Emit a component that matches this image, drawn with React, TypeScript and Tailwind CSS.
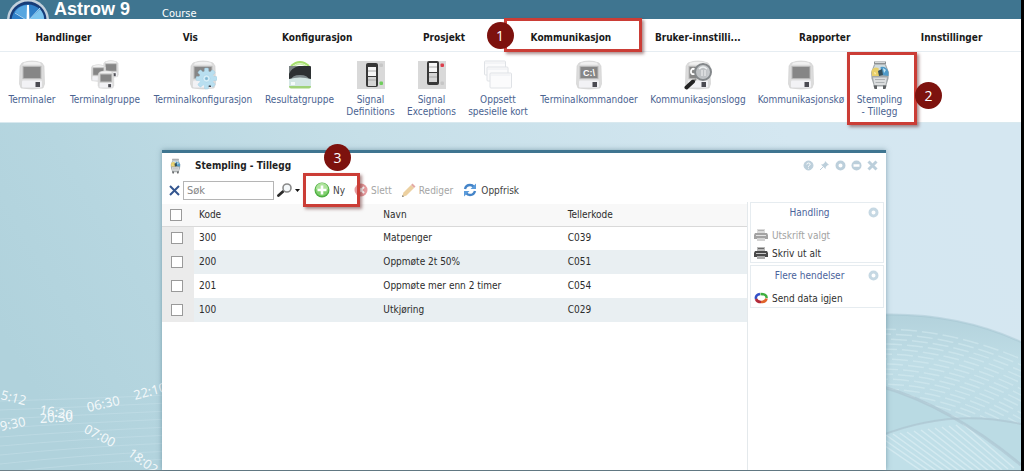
import clsx from "clsx"
import type { ComponentType, PropsWithChildren } from "react"

interface TerminalProps {
  x?: number
  y?: number
  scale?: number
  label?: string
}

const Terminal = ({ x = 0, y = 0, scale = 1, label }: TerminalProps) => (
  <g transform={`translate(${x} ${y}) scale(${scale})`}>
    <path
      d="M4 3q10-4 20 0l2 3 .5 18-1.500 4q-11 2-22 0L1.500 24 2 6z"
      fill="#dcdcdc"
      stroke="#cfcfcf"
      strokeWidth="0.6"
    />
    <path d="M6 2.800q8-2 16 0l1 2H5z" fill="#f1f1f1" />
    <rect x="5" y="6.500" width="18" height="12" fill="#868686" stroke="#b9b9b9" />
    <rect x="4" y="20.500" width="20" height="7" rx="1" fill="#f2f2f5" />
    <rect x="17.500" y="22" width="4.500" height="5" fill="#4b4b52" />
    {label ? (
      <text
        x="14"
        y="16"
        textAnchor="middle"
        fontSize="9"
        fontWeight="bold"
        fill="#fff"
        fontFamily="Liberation Sans, sans-serif"
      >
        {label}
      </text>
    ) : null}
  </g>
)

const Svg = ({ children }: PropsWithChildren) => (
  <svg viewBox="0 0 28 30" className="h-[30px] w-7 shrink-0" aria-hidden="true">
    {children}
  </svg>
)

const TerminalIcon = () => (
  <Svg>
    <Terminal />
  </Svg>
)

const TerminalGroupIcon = () => (
  <Svg>
    <Terminal x={11.500} y={0} scale={0.6} />
    <Terminal x={-1} y={4} scale={0.6} />
    <Terminal x={6} y={10} scale={0.64} />
  </Svg>
)

const TerminalConfigIcon = () => (
  <Svg>
    <Terminal />
    <g fill="#b9dff0" stroke="#9ccbe0" strokeWidth="0.4">
      {[0, 45, 90, 135, 180, 225, 270, 315].map((angle) => (
        <rect
          key={angle}
          x="15.500"
          y="8"
          width="4"
          height="5"
          rx="1"
          transform={`rotate(${angle} 17.500 18.500)`}
        />
      ))}
      <circle cx="17.500" cy="18.500" r="7.500" stroke="none" />
      <circle cx="17.500" cy="18.500" r="3.500" fill="#d9f0f9" />
      <circle cx="17.500" cy="18.500" r="1.500" fill="#7fb6d2" />
    </g>
  </Svg>
)

const ResultIcon = () => (
  <Svg>
    <path d="M5 6q9-8 18 0" fill="none" stroke="#a5df6c" strokeWidth="2" />
    <path d="M8 6q6-4 12 0" fill="none" stroke="#c8edaa" strokeWidth="1.500" />
    <rect x="3" y="6" width="22" height="16" rx="1" fill="#2d3133" />
    <path d="M3 6h10q-8 2-10 8z" fill="#7b8384" />
    <path d="M5 20q1-5 9-5t9 5z" fill="#7d888b" />
    <path d="M3 19q11-3 22 0v7q0 2-2 2H5q-2 0-2-2z" fill="#d3e6e4" />
    <path d="M3 26h22q0 2.500-2 2.500H5q-2 0-2-2.500z" fill="#9fd277" />
    <rect x="5" y="22" width="4" height="3" fill="#f4fbfa" />
  </Svg>
)

const SwitchIcon = ({ on }: { on: boolean }) => (
  <Svg>
    <rect x="0" y="1" width="28" height="28" fill="#d9d9d9" />
    <rect x="9" y={on ? 3 : 1} width="12" height="24" rx="2" fill="#383838" />
    <rect x="11" y={on ? 7 : 3} width="8" height="9" fill="#f6f6f6" />
    <rect x="11" y={on ? 17 : 13} width="8" height="9" fill="#d4d4d4" />
    <path d={on ? "M11 11h8M11 20h8" : "M11 7h8M11 17h8"} stroke="#aaa" />
    <rect
      x="22.500"
      y={on ? 21.500 : 3.500}
      width="3.500"
      height="3.500"
      rx="1"
      fill={on ? "#6fce5c" : "#dc3e4c"}
    />
    <rect x="22.500" y={on ? 3.500 : 21.500} width="3.500" height="3.500" rx="1" fill="#c6c6c6" />
  </Svg>
)

const SignalDefinitionsIcon = () => <SwitchIcon on />
const SignalExceptionsIcon = () => <SwitchIcon on={false} />

const CardsIcon = () => (
  <Svg>
    <g fill="#fbfbfc" stroke="#dfe2e6">
      <rect x="0.500" y="1" width="21" height="14" rx="1" />
      <rect x="3" y="7" width="21" height="14" rx="1" />
      <rect x="6" y="13" width="21.500" height="15" rx="1" />
    </g>
    <path d="M1 3h20M3.500 9h20M6.500 15h20" stroke="#eceef1" />
  </Svg>
)

const CommandIcon = () => (
  <Svg>
    <Terminal label="C:\" />
  </Svg>
)

const LogIcon = () => (
  <Svg>
    <Terminal />
    <path
      d="M11 9.500q-3-2-4 1.500-.5 4 4 3"
      fill="none"
      stroke="#fff"
      strokeWidth="1.800"
    />
    <path d="M12 19l-3 3" stroke="#8a8a8a" strokeWidth="2" />
    <path d="M9 21.500l-6.500 6" stroke="#242424" strokeWidth="4" strokeLinecap="round" />
    <circle cx="19" cy="12" r="8" fill="#c4c8cb" fillOpacity="0.9" />
    <circle cx="19" cy="12" r="8" fill="none" stroke="#83878a" strokeWidth="2" />
    <path d="M15 9q4-4 8 0" fill="none" stroke="#eef1f2" strokeWidth="1.500" />
    <path d="M18 10v6m3-6v6" stroke="#f5f5f5" />
  </Svg>
)

const PunchArt = () => (
  <>
    <path d="M8 1.500h12v3H8z" fill="#8d9193" />
    <path d="M9 2.500h10" stroke="#d5d8d9" />
    <path d="M8 4.500h12l3 8-.5 6-2.500 8H8l-2.500-8-.5-6z" fill="#a2a7a9" />
    <path d="M9 5h10l2 5H7z" fill="#cfdbde" />
    <path d="M5.500 11q2-5 7-3l1 8H6z" fill="#e8cf6a" />
    <path d="M14.500 7q6-1 8 5v4l-7-1z" fill="#4f9ac8" />
    <path d="M12 11l4-2 1 6-4 1z" fill="#35505c" />
    <path d="M17 8l3 2-2 3z" fill="#c8e8f4" />
    <path d="M8 12l2 1-1 2z" fill="#fff3c0" />
    <path d="M7 17.500h14l-1.500 7.500h-11z" fill="#dcdedf" />
    <path d="M9 19.500h10M9.500 22.500h9" stroke="#aeb2b4" />
    <path d="M7.500 25.500h3.500v3.500H8.500zM17 25.500h3.500l-1 3.500H17z" fill="#5f6264" />
  </>
)

const PunchIcon = () => (
  <Svg>
    <PunchArt />
  </Svg>
)

interface MenuProps {
  label: string
  step?: boolean
}

const menus: MenuProps[] = [
  { label: "Handlinger" },
  { label: "Vis" },
  { label: "Konfigurasjon" },
  { label: "Prosjekt" },
  { label: "Kommunikasjon", step: true },
  { label: "Bruker-innstilli..." },
  { label: "Rapporter" },
  { label: "Innstillinger" },
]

interface Tool {
  lines: string[]
  width: string
  Icon: ComponentType
  step?: boolean
}

const tools: Tool[] = [
  { lines: ["Terminaler"], width: "w-[62px]", Icon: TerminalIcon },
  { lines: ["Terminalgruppe"], width: "w-[84px]", Icon: TerminalGroupIcon },
  { lines: ["Terminalkonfigurasjon"], width: "w-[112px]", Icon: TerminalConfigIcon },
  { lines: ["Resultatgruppe"], width: "w-[81px]", Icon: ResultIcon },
  { lines: ["Signal", "Definitions"], width: "w-[61px]", Icon: SignalDefinitionsIcon },
  { lines: ["Signal", "Exceptions"], width: "w-[61px]", Icon: SignalExceptionsIcon },
  { lines: ["Oppsett", "spesielle kort"], width: "w-[72px]", Icon: CardsIcon },
  { lines: ["Terminalkommandoer"], width: "w-[110px]", Icon: CommandIcon },
  { lines: ["Kommunikasjonslogg"], width: "w-[108px]", Icon: LogIcon },
  { lines: ["Kommunikasjonskø"], width: "w-[98px]", Icon: TerminalIcon },
  { lines: ["Stempling", "- Tillegg"], width: "w-[59px]", Icon: PunchIcon, step: true },
]

const rows = [
  { code: "300", name: "Matpenger", counter: "C039" },
  { code: "200", name: "Oppmøte 2t 50%", counter: "C051" },
  { code: "201", name: "Oppmøte mer enn 2 timer", counter: "C054" },
  { code: "100", name: "Utkjøring", counter: "C029" },
]

const times = [
  { text: "5:12", x: 0, y: 276, angle: 14 },
  { text: "9:30", x: 1, y: 308, angle: -12 },
  { text: "16:20", x: 39, y: 291, angle: 10 },
  { text: "20:30", x: 40, y: 300, angle: -3 },
  { text: "06:30", x: 88, y: 289, angle: -13 },
  { text: "22:10", x: 135, y: 277, angle: -15 },
  { text: "07:00", x: 83, y: 309, angle: 28 },
  { text: "18:02", x: 127, y: 332, angle: 36 },
]

const Frame = ({ className }: { className: string }) => (
  <span
    className={clsx(
      "pointer-events-none absolute z-10 border-[3px] border-[#cb3d36] shadow-[2px_2px_3px_rgba(90,30,30,0.5)]",
      className,
    )}
  />
)

const Badge = ({ className, children }: PropsWithChildren<{ className: string }>) => (
  <span
    className={clsx(
      "pointer-events-none absolute z-20 flex size-[27px] items-center justify-center rounded-full bg-[#7d120e] font-['Open_Sans',sans-serif] text-sm font-normal text-white",
      className,
    )}
  >
    {children}
  </span>
)

const Brand = () => (
  <header className="flex h-[19px] overflow-hidden bg-[#3f7590] pl-[6px] text-white">
    <svg viewBox="0 0 44 44" className="size-[44px] shrink-0" aria-hidden="true">
      <circle cx="22" cy="20" r="21" fill="#c3d0dc" />
      <circle cx="22" cy="20" r="18.500" fill="#173c78" />
      <circle cx="22" cy="21" r="16.500" fill="#2f7fc8" />
      <path d="M22 21L9 12a16 16 0 0 1 12-7z" fill="#57a6e0" />
      <path d="M22 21L34 9a16 16 0 0 1 4 12z" fill="#7cc4ee" />
      <path d="M9 13l13 8M34 8l-12 13" stroke="#a9d4f0" />
      <path d="M21 5h2l.5 16h-3z" fill="#fff" />
    </svg>
    <h1 className="ml-1 font-['Liberation_Sans',sans-serif] text-[18px]/[19px] font-bold">
      Astrow 9
    </h1>
    <span className="ml-8 text-[11px]/[28px]">Course</span>
  </header>
)

const MenuBar = () => (
  <nav className="grid h-[33px] grid-cols-8 border-b border-[#e6edf2] bg-white pr-[6px]">
    {menus.map(({ label, step }) => (
      <div key={label} className="relative flex">
        <button type="button" className="w-full pt-1 text-[10px] font-bold text-[#1a1a1a]">
          {label}
        </button>
        {step ? (
          <>
            <Frame className="-inset-y-px -right-2 -left-1" />
            <Badge className="top-[3px] -left-[21px]">1</Badge>
          </>
        ) : null}
      </div>
    ))}
  </nav>
)

const ToolBar = () => (
  <div className="flex h-[71px] border-b border-[#d9e9ef] bg-white pl-px">
    {tools.map(({ lines, width, Icon, step }) => (
      <div key={lines.join(" ")} className={clsx("relative shrink-0", width)}>
        <button
          type="button"
          className="flex w-full flex-col items-center pt-2 text-[10px]/[12px] whitespace-nowrap text-[#4a6391]"
        >
          <Icon />
          <span className="mt-1">
            {lines.map((line) => (
              <span key={line} className="block">
                {line}
              </span>
            ))}
          </span>
        </button>
        {step ? (
          <>
            <Frame className="top-0 -right-2 -bottom-[3px] -left-[3px]" />
            <Badge className="top-[30px] -right-[33px]">2</Badge>
          </>
        ) : null}
      </div>
    ))}
  </div>
)

const strands = Array.from({ length: 16 }, (_, i) => i)

const Backdrop = () => (
  <svg
    viewBox="0 0 1021 349"
    preserveAspectRatio="xMinYMin slice"
    className="absolute inset-0 size-full"
    aria-hidden="true"
  >
    <defs>
      <linearGradient id="sky" x1="0" y1="0.6" x2="1" y2="0.4">
        <stop offset="0" stopColor="#b0d2dc" />
        <stop offset="0.16" stopColor="#b6d6e0" />
        <stop offset="0.45" stopColor="#c6dfe8" />
        <stop offset="0.85" stopColor="#d4e7f1" />
        <stop offset="1" stopColor="#d5e7f1" />
      </linearGradient>
      <linearGradient id="ribbon" x1="0" y1="0" x2="0" y2="1">
        <stop offset="0" stopColor="#b3d2dc" />
        <stop offset="0.3" stopColor="#bfdde6" />
        <stop offset="1" stopColor="#bcdbe5" />
      </linearGradient>
    </defs>
    <rect width="1021" height="349" fill="url(#sky)" />
    <g fill="none" stroke="#c9e3ea" strokeOpacity="0.45">
      {strands.slice(0, 9).map((i) => (
        <path key={i} d={`M0 ${278 + i * 9}Q80 ${276 + i * 8} 170 ${272 + i * 8}`} />
      ))}
    </g>
    <path d="M840 195Q940 182 1021 219V349H840z" fill="url(#ribbon)" />
    <path
      d="M840 195Q940 182 1021 219"
      fill="none"
      stroke="#a6c6d1"
      strokeWidth="2"
      strokeOpacity="0.5"
    />
    <g fill="none" stroke="#dceff5" strokeOpacity="0.45" strokeWidth="1.500">
      {strands.map((i) => (
        <path
          key={i}
          strokeDasharray="16 5"
          strokeDashoffset={i * 5}
          d={`M880 ${206 + i * 5}Q950 ${206 + i * 5} 1021 ${236 + i * 6}`}
        />
      ))}
    </g>
    <path d="M880 263Q950 283 1021 342V349H880z" fill="#b9dae3" />
    <path d="M880 313Q920 298 962 295L1021 342V349H880z" fill="#c0dfe8" />
    <g fill="none" stroke="#dceef4" strokeWidth="1.500" strokeOpacity="0.7">
      {strands.slice(0, 14).map((i) => (
        <path key={i} d={`M${872 + i * 7} ${314 - i}l${64 - i} 44`} />
      ))}
    </g>
    <path d="M955 296Q985 292 1021 301V342Q990 316 955 296z" fill="#bbdbe4" />
    <g fill="none" stroke="#a9bfcc" strokeOpacity="0.55" strokeWidth="3">
      <path d="M880 263Q950 283 1021 342" />
      <path d="M880 313Q950 285 1021 301" strokeWidth="2" />
    </g>
    <g fill="#fff" fillOpacity="0.85" fontSize="13" fontFamily="Noto Sans, sans-serif">
      {times.map(({ text, x, y, angle }) => (
        <text key={text} transform={`translate(${x} ${y}) rotate(${angle})`}>
          {text}
        </text>
      ))}
    </g>
  </svg>
)

const WindowControls = () => (
  <div className="ml-auto flex gap-[5px] pr-2">
    {["Hjelp", "Fest", "Minimer", "Maksimer", "Lukk"].map((label) => (
      <button key={label} type="button" aria-label={label}>
        <svg viewBox="0 0 11 11" className="size-[11px]" fill="none" stroke="#bccfdb">
          {label === "Hjelp" ? (
            <>
              <circle cx="5.500" cy="5.500" r="4.500" fill="#bccfdb" />
              <path
                d="M3.800 4.500q0-1.500 1.700-1.500t1.700 1.300q0 .8-1 1.200t-.7 1.200M5.500 7.800v.8"
                stroke="#fff"
              />
            </>
          ) : null}
          {label === "Fest" ? (
            <>
              <path
                d="M6 1l4 4-1.500.2L6.800 7l-.3 2L2 4.500l2-.3L5.800 2.500z"
                fill="#bccfdb"
                stroke="none"
              />
              <path d="M4.500 6.500L1 10" />
            </>
          ) : null}
          {label === "Minimer" ? (
            <circle cx="5.500" cy="5.500" r="3.500" strokeWidth="3" />
          ) : null}
          {label === "Maksimer" ? (
            <>
              <circle cx="5.500" cy="5.500" r="5" fill="#bccfdb" stroke="none" />
              <path d="M2.500 5.500h6" stroke="#fff" strokeWidth="2.500" />
            </>
          ) : null}
          {label === "Lukk" ? <path d="M1.500 1.500l8 8m0-8l-8 8" strokeWidth="3" /> : null}
        </svg>
      </button>
    ))}
  </div>
)

const ActionBar = () => (
  <div className="flex h-6 items-center pl-[7px] text-[10px] text-[#3f3f3f]">
    <button type="button" aria-label="Tøm søk">
      <svg viewBox="0 0 11 11" className="size-[11px]" stroke="#34568f" strokeWidth="2">
        <path d="M1 1l9 9M10 1l-9 9" />
      </svg>
    </button>
    <input
      type="text"
      aria-label="Søk"
      placeholder="Søk"
      className="ml-[3px] h-[19px] w-[91px] border border-[#b5b5b5] bg-white px-[3px] text-[11px] placeholder:text-[#858585]"
    />
    <button type="button" aria-label="Søkevalg" className="ml-[3px] flex items-center gap-[2px]">
      <svg viewBox="0 0 16 14" className="h-[14px] w-4" fill="none">
        <path d="M6 8.500l-4.500 4" stroke="#2b2b2b" strokeWidth="2.800" strokeLinecap="round" />
        <circle cx="10" cy="5" r="4" fill="#f4f8fa" stroke="#8a8a8a" strokeWidth="1.600" />
      </svg>
      <svg viewBox="0 0 5 3" className="h-[3px] w-[5px]">
        <path d="M0 0h5L2.500 3z" fill="#111" />
      </svg>
    </button>
    <div className="relative ml-[14px] flex w-10">
      <button type="button" className="flex items-center gap-[3px]">
        <svg viewBox="0 0 16 16" className="size-4">
          <circle cx="8" cy="8" r="7.500" fill="#4fae43" />
          <circle cx="8" cy="7.500" r="6.500" fill="#7fcf6d" />
          <path d="M2 7a6 6 0 0 1 12 0q-6 3-12 0z" fill="#aee39d" />
          <path d="M8 3.500v9M3.500 8h9" stroke="#fff" strokeWidth="2.600" />
        </svg>
        Ny
      </button>
      <Frame className="-top-[9px] -right-[6px] -bottom-[9px] -left-[11px]" />
      <Badge className="-top-[38px] left-[10px]">3</Badge>
    </div>
    <button type="button" disabled className="flex items-center gap-[3px] text-[#a5a5a5]">
      <svg viewBox="0 0 14 14" className="size-[14px]">
        <circle cx="7" cy="7" r="6.500" fill="#e59a9d" />
        <path d="M4 4l6 6m0-6l-6 6" stroke="#fff" strokeWidth="2" />
      </svg>
      Slett
    </button>
    <button type="button" disabled className="ml-[9px] flex items-center gap-[3px] text-[#a5a5a5]">
      <svg viewBox="0 0 15 15" className="size-[15px]">
        <path d="M1 14l1.500-4.500L10 2l3 3-7.500 7.500z" fill="#ecd0a0" />
        <path d="M10 2l1.500-1.500 3 3L13 5z" fill="#e3a9a4" />
        <path d="M1 14l.6-2 1.400 1.400z" fill="#777" />
      </svg>
      Rediger
    </button>
    <button type="button" className="ml-[10px] flex items-center gap-1">
      <svg viewBox="0 0 14 14" className="size-[14px]" fill="none" stroke="#4484c8" strokeWidth="2.400">
        <path d="M2 6q1-4 5-4 2.500 0 4 2M12 8q-1 4-5 4-2.500 0-4-2" />
        <path d="M13 .5V6H7.500zM1 13.500V8h5.500z" fill="#5b9bdb" stroke="none" />
      </svg>
      Oppfrisk
    </button>
  </div>
)

const checkboxClass =
  "block size-3 appearance-none border border-[#9a9a9a] bg-white checked:bg-[#3f7590]"

const RecordTable = () => (
  <div className="min-w-0 flex-1 border-r border-[#e4e9ec] pt-[2px]">
    <table className="w-full table-fixed border-collapse text-left text-[10px]/[12px] text-[#2c2c2c]">
      <colgroup>
        <col className="w-8" />
        <col />
        <col />
        <col />
      </colgroup>
      <thead>
        <tr className="h-[22px] border-b border-[#d9d9d9] bg-[#f8f8f8]">
          <th className="pl-2">
            <input type="checkbox" aria-label="Velg alle" className={checkboxClass} />
          </th>
          <th className="pl-[5px] font-normal">Kode</th>
          <th className="pl-[5px] font-normal">Navn</th>
          <th className="pl-[5px] font-normal">Tellerkode</th>
        </tr>
      </thead>
      <tbody>
        {rows.map(({ code, name, counter }) => (
          <tr key={code} className="h-6 even:bg-[#e9eff2]">
            <td className="bg-[#ebebeb] pl-[9px]">
              <input type="checkbox" aria-label={`Velg ${code}`} className={checkboxClass} />
            </td>
            <td className="pl-[5px]">{code}</td>
            <td className="pl-[5px]">{name}</td>
            <td className="pl-[5px]">{counter}</td>
          </tr>
        ))}
      </tbody>
    </table>
  </div>
)

const Printer = ({ faded = false }: { faded?: boolean }) => (
  <svg viewBox="0 0 14 12" className={clsx("h-3 w-[14px]", faded && "opacity-50")}>
    <path d="M3 0h8v4H3z" fill="#b9b9b9" />
    <path d="M4 1.500h6" stroke="#6a6a6a" />
    <path d="M1 4h12l1 2v4H0V6z" fill="#4a4a4a" />
    <path d="M2 6.500h10" stroke="#c9c9c9" />
    <path d="M3 9h8v3H3z" fill="#a9a9a9" />
  </svg>
)

const Group = ({ title, children }: PropsWithChildren<{ title: string }>) => (
  <section className="border border-[#e6ecf0]">
    <h3 className="flex h-[18px] items-center text-[10px] text-[#4a639b]">
      <span className="flex-1 text-center">{title}</span>
      <button type="button" aria-label={`Skjul ${title}`} className="mr-1">
        <svg viewBox="0 0 11 11" className="size-[11px]">
          <circle cx="5.500" cy="5.500" r="3.500" fill="none" stroke="#c6d8e3" strokeWidth="3" />
        </svg>
      </button>
    </h3>
    <div className="pt-[5px]">{children}</div>
  </section>
)

const actionClass = "flex h-[18px] w-full items-center gap-1 pl-[3px] text-[10px]"

const SidePanel = () => (
  <aside className="flex w-[138px] shrink-0 flex-col gap-[2px] px-[2px]">
    <Group title="Handling">
      <button type="button" disabled className={clsx(actionClass, "text-[#a2a2a2]")}>
        <Printer faded />
        Utskrift valgt
      </button>
      <button type="button" className={clsx(actionClass, "text-[#2f2f2f]")}>
        <Printer />
        Skriv ut alt
      </button>
    </Group>
    <Group title="Flere hendelser">
      <button type="button" className={clsx(actionClass, "text-[#2f2f2f]")}>
        <svg viewBox="0 0 14 12" className="h-3 w-[14px]" fill="none" strokeWidth="2.600">
          <path d="M2 7Q1 3 6 2" stroke="#3350c8" />
          <path d="M6.500 2Q13 2 12.500 6" stroke="#3fae3f" />
          <path d="M12.500 6.500Q12 10 7 10" stroke="#e0632c" />
          <path d="M7 10Q3 10 2 7" stroke="#b32a3a" />
        </svg>
        Send data igjen
      </button>
    </Group>
  </aside>
)

const RecordWindow = () => (
  <section className="relative flex min-w-0 flex-1 flex-col border-t-[3px] border-[#3f7590] bg-white shadow-[0_0_5px_rgba(60,100,120,0.5)]">
    <div className="flex h-[25px] items-center pl-[6px]">
      <svg viewBox="0 0 28 30" className="h-4 w-[15px]" aria-hidden="true">
        <PunchArt />
      </svg>
      <h2 className="ml-3 text-[10px] font-bold text-[#1f1f1f]">Stempling - Tillegg</h2>
      <WindowControls />
    </div>
    <ActionBar />
    <div className="flex flex-1">
      <RecordTable />
      <SidePanel />
    </div>
  </section>
)

const App = () => (
  <div className="flex min-h-screen flex-col border-r-[3px] border-black bg-white font-['DejaVu_Sans_Condensed','DejaVu_Sans',sans-serif]">
    <Brand />
    <MenuBar />
    <ToolBar />
    <main className="relative flex flex-1 border-b border-[#6d7f87] pt-[27px] pr-[135px] pl-[162px]">
      <Backdrop />
      <RecordWindow />
    </main>
  </div>
)

export default App
